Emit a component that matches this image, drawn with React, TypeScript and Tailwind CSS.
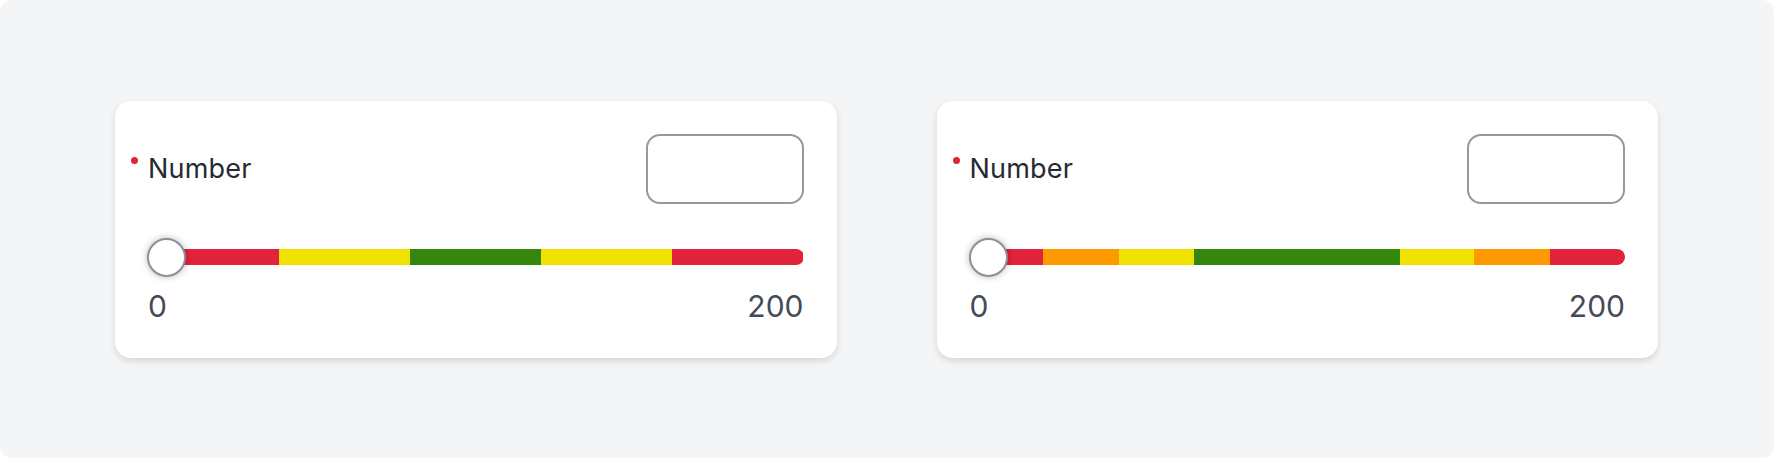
import React from 'react'

const RED = 'bg-[#e2233b]'
const ORANGE = 'bg-[#fd9a00]'
const YELLOW = 'bg-[#f0e100]'
const GREEN = 'bg-[#34860c]'

type Segment = { color: string; grow: string }

const equalBands: Segment[] = [
  { color: RED, grow: 'flex-1' },
  { color: YELLOW, grow: 'flex-1' },
  { color: GREEN, grow: 'flex-1' },
  { color: YELLOW, grow: 'flex-1' },
  { color: RED, grow: 'flex-1' },
]

const fineBands: Segment[] = [
  { color: RED, grow: 'flex-[74]' },
  { color: ORANGE, grow: 'flex-[76]' },
  { color: YELLOW, grow: 'flex-[75]' },
  { color: GREEN, grow: 'flex-[206]' },
  { color: YELLOW, grow: 'flex-[75]' },
  { color: ORANGE, grow: 'flex-[76]' },
  { color: RED, grow: 'flex-[75]' },
]

const RangeCard = ({ bands }: { bands: Segment[] }) => {
  return (
    <div className="bg-white rounded-[16px] shadow-[0_3px_7px_rgba(0,0,0,0.13)] px-[33px] pt-[33px] pb-[37px]">
      {/* label + value box */}
      <div className="flex items-center justify-between h-[70px]">
        <div className="relative">
          <span className="absolute -left-[17px] top-[2px] w-[7px] h-[7px] rounded-full bg-[#e0243a]" />
          <span className="block text-[27px] leading-[27px] tracking-[0.2px] text-[#262a33]">Number</span>
        </div>
        <input
          type="text"
          className="w-[158px] h-[70px] rounded-[14px] border-2 border-[#97989f] bg-white outline-none px-4 text-[24px]"
        />
      </div>

      {/* track */}
      <div className="relative mt-[34px] h-[38px] flex items-center">
        <div className="w-full h-[16px] rounded-full overflow-hidden flex">
          {bands.map((b, i) => (
            <div key={i} className={`${b.grow} ${b.color}`} />
          ))}
        </div>
        <div className="absolute left-[-1px] top-0 w-[39px] h-[39px] rounded-full bg-white border-2 border-[#8e8f99] shadow-[0_0_7px_rgba(0,0,0,0.28)]" />
      </div>

      <div className="mt-[16px] flex justify-between text-[30px] leading-[29px] text-[#454a57]">
        <span>0</span>
        <span>200</span>
      </div>
    </div>
  )
}

export default function App() {
  return (
    <div className="bg-white w-[1774px] h-[458px]" style={{ fontFamily: 'Inter, "Noto Sans", sans-serif' }}>
      <div className="h-full rounded-[12px] bg-[#f4f5f7] flex items-center">
        <div className="grid grid-cols-2 gap-[100px] w-full pl-[115px] pr-[116px]">
          <RangeCard bands={equalBands} />
          <RangeCard bands={fineBands} />
        </div>
      </div>
    </div>
  )
}
